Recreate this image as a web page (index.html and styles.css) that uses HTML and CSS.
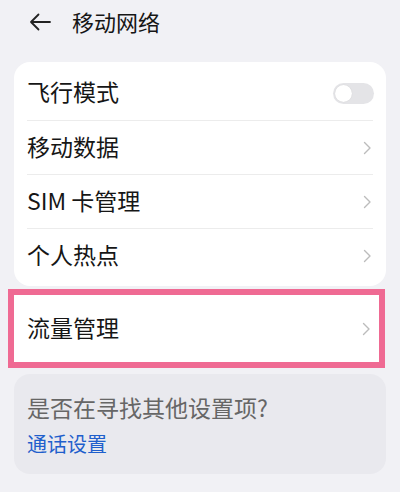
FILE: index.html
```html
<!DOCTYPE html>
<html lang="zh-CN">
<head>
<meta charset="utf-8">
<link rel="stylesheet" href="styles.css">
</head>
<body>
<div class="page">
  <header class="header">
    <svg class="back" width="22" height="18" viewBox="0 0 22 18"><path d="M21 9H2M9.5 1.5L2 9l7.5 7.5" fill="none" stroke="#222" stroke-width="1.8" stroke-linecap="round" stroke-linejoin="round"/></svg>
    <span class="title">移动网络</span>
  </header>
  <main class="content">
    <section class="card">
      <div class="row"><span class="label">飞行模式</span><span class="toggle"><span class="knob"></span></span></div>
      <div class="row sep"><span class="label">移动数据</span><svg class="chev" width="9" height="14" viewBox="0 0 9 14"><path d="M1.5 1.5L7 7l-5.5 5.5" fill="none" stroke="#bcbcbc" stroke-width="1.4" stroke-linecap="round" stroke-linejoin="round"/></svg></div>
      <div class="row sep"><span class="label">SIM 卡管理</span><svg class="chev" width="9" height="14" viewBox="0 0 9 14"><path d="M1.5 1.5L7 7l-5.5 5.5" fill="none" stroke="#bcbcbc" stroke-width="1.4" stroke-linecap="round" stroke-linejoin="round"/></svg></div>
      <div class="row sep"><span class="label">个人热点</span><svg class="chev" width="9" height="14" viewBox="0 0 9 14"><path d="M1.5 1.5L7 7l-5.5 5.5" fill="none" stroke="#bcbcbc" stroke-width="1.4" stroke-linecap="round" stroke-linejoin="round"/></svg></div>
    </section>
    <section class="highlight">
      <span class="label">流量管理</span><svg class="chev" width="9" height="14" viewBox="0 0 9 14"><path d="M1.5 1.5L7 7l-5.5 5.5" fill="none" stroke="#bcbcbc" stroke-width="1.4" stroke-linecap="round" stroke-linejoin="round"/></svg>
    </section>
    <section class="suggest">
      <div class="question">是否在寻找其他设置项?</div>
      <div class="link">通话设置</div>
    </section>
  </main>
</div>
</body>
</html>
```
FILE: styles.css
```css
html, body {
  margin: 0;
  padding: 0;
}
body {
  background: #f1f1f5;
  font-family: "Noto Sans CJK SC", "Noto Sans", sans-serif;
  color: #161616;
  width: 400px;
  height: 492px;
  overflow: hidden;
}
.header {
  height: 44px;
  display: flex;
  align-items: center;
  padding-left: 29px;
  padding-bottom: 3px;
  box-sizing: border-box;
}
.back {
  display: block;
  margin-top: 3px;
}
.title {
  margin-left: 21px;
  font-size: 22px;
  line-height: 28px;
}
.content {
  padding: 18px 14px 0;
}
.card {
  background: #fff;
  border-radius: 16px;
  padding: 4px 0;
}
.row {
  height: 54px;
  margin: 0 13px;
  display: flex;
  align-items: center;
  justify-content: space-between;
  box-sizing: border-box;
}
.row.sep {
  border-top: 1px solid #ececec;
}
.label {
  font-size: 23px;
  line-height: 28px;
  padding-bottom: 4px;
}
.chev {
  display: block;
  margin-right: 1px;
}
.toggle {
  width: 41px;
  height: 21px;
  border-radius: 11px;
  background: #e4e4e7;
  position: relative;
  margin-right: -1px;
}
.knob {
  position: absolute;
  left: 2px;
  top: 2px;
  width: 17px;
  height: 17px;
  border-radius: 50%;
  background: #fff;
  box-shadow: 0 0 1px rgba(0,0,0,0.15);
}
.highlight {
  margin: 3px 1px 0 -6px;
  height: 79px;
  box-sizing: border-box;
  border: 6px solid #ef6a93;
  background: #fff;
  display: flex;
  align-items: center;
  justify-content: space-between;
  padding: 0 7px 0 13px;
}
.suggest {
  margin-top: 6px;
  height: 100px;
  box-sizing: border-box;
  background: #e9e9ee;
  border-radius: 16px;
  padding: 19px 13px 0;
}
.question {
  font-size: 23px;
  line-height: 28px;
  color: #666;
}
.link {
  margin-top: 10px;
  font-size: 20px;
  line-height: 26px;
  color: #1f5fcc;
}
```
